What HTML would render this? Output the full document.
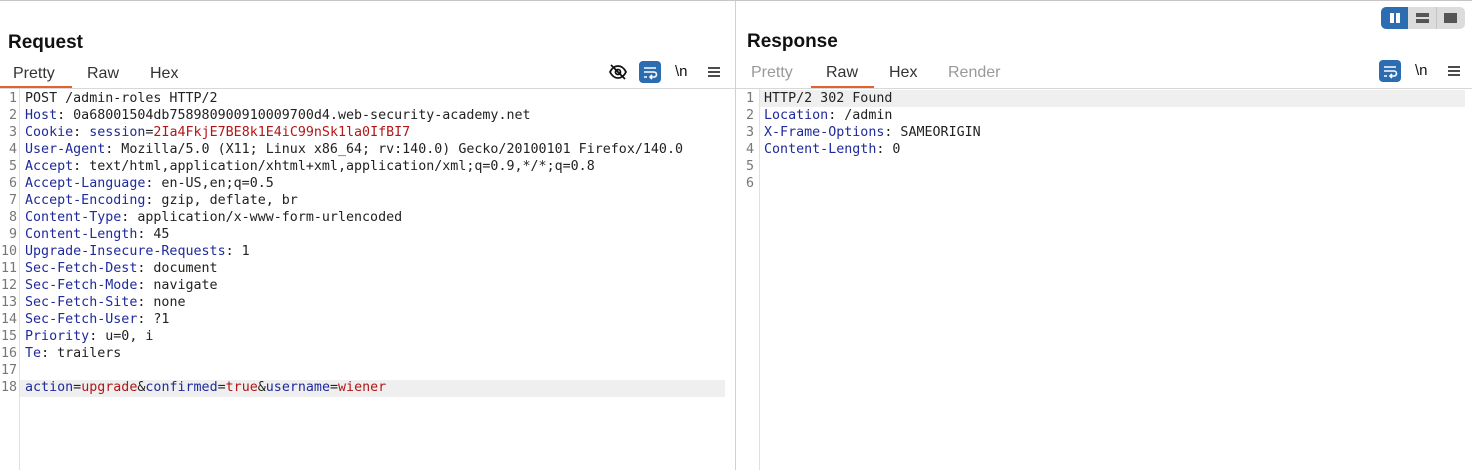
<!DOCTYPE html>
<html><head><style>
*{margin:0;padding:0;box-sizing:border-box}
body{width:1472px;height:469px;background:#fff;font-family:"Liberation Sans",sans-serif;position:relative;overflow:hidden;border-top:1px solid #c8c4c4}
.abs{position:absolute}
h2{position:absolute;font-size:19px;font-weight:bold;color:#111}
.tab{position:absolute;font-size:16px;color:#333;top:64px}
.tab.dim{color:#999}
.ul{position:absolute;height:2px;background:#e8602c;top:85px}
.hr{position:absolute;top:87px;height:1px;background:#d8d8d8}
.code{position:absolute;top:89px;font-family:"DejaVu Sans Mono","Liberation Mono",monospace;font-size:13.33px;line-height:17px;color:#222;white-space:pre}
.ln{position:absolute;top:89px;font-family:"DejaVu Sans Mono","Liberation Mono",monospace;font-size:13.33px;line-height:17px;color:#777;white-space:pre;text-align:right}
.k{color:#1f2a9c}.v{color:#b31616}
.btn{position:absolute;width:22px;height:22px;background:#2c6cb0;border-radius:4px}
</style></head><body>
<div class="abs" style="left:735px;top:0;width:1px;height:469px;background:#d0d0d0"></div>
<h2 style="left:8px;top:31px">Request</h2>
<h2 style="left:747px;top:30px">Response</h2>
<div class="tab" style="left:13px">Pretty</div>
<div class="tab" style="left:87px">Raw</div>
<div class="tab" style="left:150px">Hex</div>
<div class="ul" style="left:0;width:72px"></div>
<div class="tab dim" style="left:751px;top:63px">Pretty</div>
<div class="tab" style="left:826px;top:63px">Raw</div>
<div class="tab" style="left:889px;top:63px">Hex</div>
<div class="tab dim" style="left:948px;top:63px">Render</div>
<div class="ul" style="left:811px;width:63px"></div>
<div class="hr" style="left:0;width:735px"></div>
<div class="hr" style="left:736px;width:736px"></div>
<div class="abs" style="left:19px;top:88px;width:1px;height:381px;background:#e0e0e0"></div>
<div class="abs" style="left:759px;top:88px;width:1px;height:381px;background:#e0e0e0"></div>
<svg class="abs" style="left:608px;top:61px" width="20" height="20" viewBox="0 0 20 20" fill="none" stroke="#111" stroke-width="1.8"><path d="M2 10c2-4 5-6 8-6s6 2 8 6c-2 4-5 6-8 6s-6-2-8-6z"/><circle cx="10" cy="10" r="2.5"/><path d="M3 3l14 14"/></svg>
<div class="btn" style="left:639px;top:60px"></div>
<svg class="abs" style="left:639px;top:60px" width="22" height="22" viewBox="0 0 22 22" fill="none" stroke="#fff" stroke-width="1.6"><path d="M5 7h12M5 11h10a2.5 2.5 0 010 5h-4M13 14l-2 2 2 2M5 16h3"/></svg>
<div class="abs" style="left:675px;top:62px;font-size:15px;color:#111">\n</div>
<svg class="abs" style="left:707px;top:64px" width="14" height="14" viewBox="0 0 14 14" stroke="#111" stroke-width="1.6"><path d="M1 3h12M1 7h12M1 11h12"/></svg>
<div class="btn" style="left:1379px;top:59px"></div>
<svg class="abs" style="left:1379px;top:59px" width="22" height="22" viewBox="0 0 22 22" fill="none" stroke="#fff" stroke-width="1.6"><path d="M5 7h12M5 11h10a2.5 2.5 0 010 5h-4M13 14l-2 2 2 2M5 16h3"/></svg>
<div class="abs" style="left:1415px;top:61px;font-size:15px;color:#111">\n</div>
<svg class="abs" style="left:1447px;top:63px" width="14" height="14" viewBox="0 0 14 14" stroke="#111" stroke-width="1.6"><path d="M1 3h12M1 7h12M1 11h12"/></svg>
<div class="abs" style="left:1381px;top:6px;width:84px;height:22px;background:#dcdcdc;border-radius:5px;overflow:hidden">
<div class="abs" style="left:0;top:0;width:27px;height:22px;background:#2c6cb0"></div>
<div class="abs" style="left:9px;top:6px;width:4px;height:10px;background:#fff"></div>
<div class="abs" style="left:15px;top:6px;width:4px;height:10px;background:#fff"></div>
<div class="abs" style="left:55px;top:0;width:1px;height:22px;background:#c4c4c4"></div>
<div class="abs" style="left:35px;top:6px;width:13px;height:4px;background:#555"></div>
<div class="abs" style="left:35px;top:12px;width:13px;height:4px;background:#555"></div>
<div class="abs" style="left:63px;top:6px;width:13px;height:10px;background:#555"></div>
</div>
<div class="abs" style="left:20px;top:379px;width:705px;height:17px;background:#efefef"></div>
<div class="abs" style="left:760px;top:89px;width:705px;height:17px;background:#efefef"></div>
<div class="ln" style="left:0;width:17px">1
2
3
4
5
6
7
8
9
10
11
12
13
14
15
16
17
18</div>
<div class="code" style="left:25px">POST /admin-roles HTTP/2
<span class="k">Host</span>: 0a68001504db758980900910009700d4.web-security-academy.net
<span class="k">Cookie</span>: <span class="k">session</span>=<span class="v">2Ia4FkjE7BE8k1E4iC99nSk1la0IfBI7</span>
<span class="k">User-Agent</span>: Mozilla/5.0 (X11; Linux x86_64; rv:140.0) Gecko/20100101 Firefox/140.0
<span class="k">Accept</span>: text/html,application/xhtml+xml,application/xml;q=0.9,*/*;q=0.8
<span class="k">Accept-Language</span>: en-US,en;q=0.5
<span class="k">Accept-Encoding</span>: gzip, deflate, br
<span class="k">Content-Type</span>: application/x-www-form-urlencoded
<span class="k">Content-Length</span>: 45
<span class="k">Upgrade-Insecure-Requests</span>: 1
<span class="k">Sec-Fetch-Dest</span>: document
<span class="k">Sec-Fetch-Mode</span>: navigate
<span class="k">Sec-Fetch-Site</span>: none
<span class="k">Sec-Fetch-User</span>: ?1
<span class="k">Priority</span>: u=0, i
<span class="k">Te</span>: trailers

<span class="k">action</span>=<span class="v">upgrade</span>&amp;<span class="k">confirmed</span>=<span class="v">true</span>&amp;<span class="k">username</span>=<span class="v">wiener</span></div>
<div class="ln" style="left:740px;width:14px">1
2
3
4
5
6</div>
<div class="code" style="left:764px">HTTP/2 302 Found
<span class="k">Location</span>: /admin
<span class="k">X-Frame-Options</span>: SAMEORIGIN
<span class="k">Content-Length</span>: 0</div>
</body></html>
